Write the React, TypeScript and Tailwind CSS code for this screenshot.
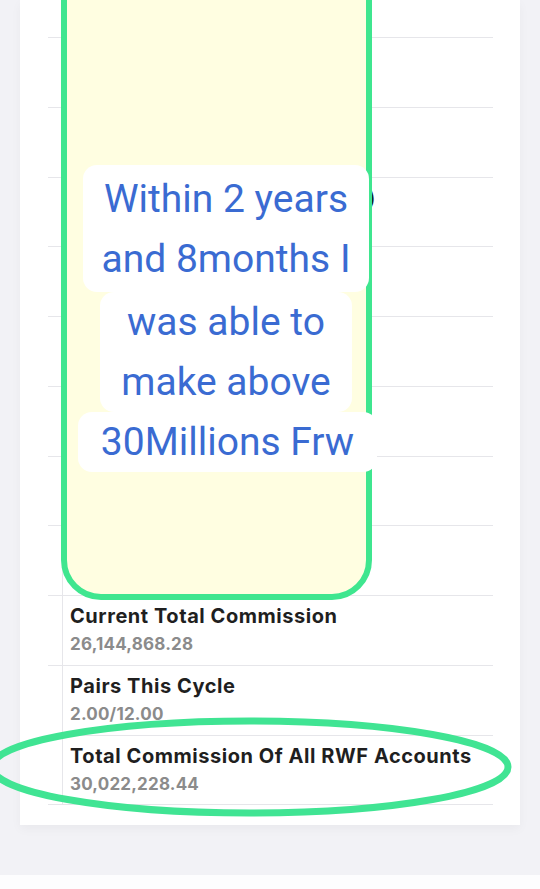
const rows = [
  { label: "Username", value: "" },
  { label: "Package", value: "" },
  { label: "Total Funds Withdrawn (RWF)", value: "" },
  { label: "Available Balance", value: "" },
  { label: "Left Points", value: "" },
  { label: "Right Points", value: "" },
  { label: "Carry Forward", value: "" },
  { label: "Cycle", value: "" },
  { label: "Current Total Commission", value: "26,144,868.28" },
  { label: "Pairs This Cycle", value: "2.00/12.00" },
  { label: "Total Commission Of All RWF Accounts", value: "30,022,228.44" },
];

export default function App() {
  return (
    <div className="relative h-[889px] w-[540px] overflow-hidden bg-[#f2f2f6] font-['Inter',sans-serif]">
      {/* card */}
      <div className="mx-[20px] h-[825px] bg-white shadow-[0_4px_10px_rgba(0,0,0,0.04)]">
        <div className="ml-[28px] mr-[27px]">
          <div className="h-[38px] border-b border-[#e6e6ea]" />
          {rows.map((r, i) => (
            <div key={i} className="flex h-[69.75px] border-b border-[#e6e6ea]">
              <div className="w-[14px]" />
              <div className="flex-1 border-l border-[#e6e6ea] pl-[7px] pt-[8px]">
                <div className="whitespace-nowrap text-[20px] leading-[25px] font-bold tracking-[0.55px] text-[#1f1f1f]">
                  {r.label}
                </div>
                {r.value && (
                  <div className="mt-[4px] text-[17px] leading-[22px] font-bold tracking-[0.2px] text-[#8b8b8b]">
                    {r.value}
                  </div>
                )}
              </div>
            </div>
          ))}
        </div>
      </div>
      <div className="mt-[50px] h-[14px] bg-[#fdfdfe]" />

      {/* yellow note overlay */}
      <div className="absolute left-[61px] top-[-60px] h-[660px] w-[311px] rounded-[40px] border-[6px] border-[#3fe68f] bg-[#fffee1]">
        <div className="flex flex-col font-['Roboto',sans-serif] text-[39px] leading-[60px] text-[#3a6bd2]">
          <div className="ml-[16px] mt-[219px] w-[286px] rounded-[14px] bg-white pt-[4px] pb-[3px] text-center">
            <div>Within 2 years</div>
            <div>and 8months I</div>
          </div>
          <div className="ml-[33px] w-[252px] rounded-[14px] bg-white text-center">
            <div>was able to</div>
            <div>make above</div>
          </div>
          <div className="ml-[11px] w-[299px] rounded-[14px] bg-white text-center">
            <div>30Millions Frw</div>
          </div>
        </div>
      </div>

      {/* highlight ring */}
      <svg className="pointer-events-none absolute left-0 top-0" width="540" height="889">
        <ellipse cx="250" cy="767" rx="258" ry="46" fill="none" stroke="#40e493" strokeWidth="7" />
      </svg>
    </div>
  );
}
